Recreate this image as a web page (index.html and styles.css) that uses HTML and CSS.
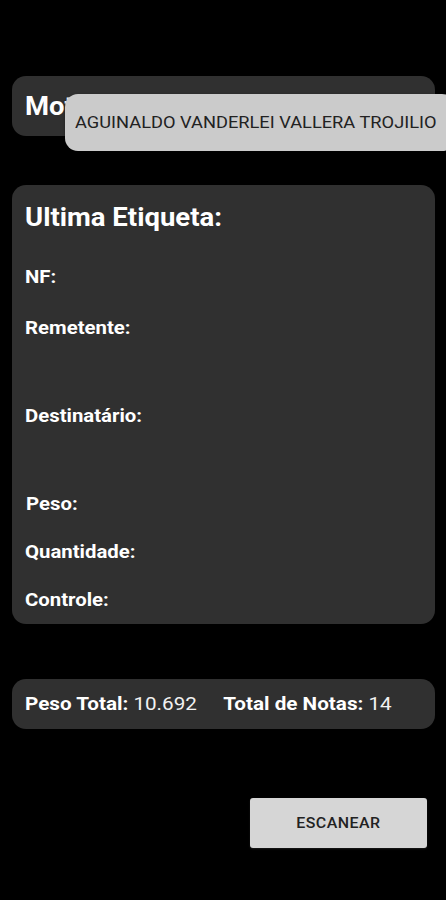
FILE: index.html
```html
<!DOCTYPE html>
<html lang="pt">
<head>
    <meta charset="UTF-8">
    <meta name="viewport" content="width=device-width, initial-scale=1.0">
    <title>Etiquetas</title>
    <link rel="stylesheet" href="styles.css">
</head>
<body>
    <div class="screen">
        <div class="card driver-card">
            <span class="wide driver-label">Motorista:</span>
        </div>

        <div class="toast"><span class="wide">AGUINALDO VANDERLEI VALLERA TROJILIO</span></div>

        <div class="card label-card">
            <div class="wide label-body">
                <h1>Ultima Etiqueta:</h1>
                <div class="field">
                    <span class="field-name">NF:</span>
                </div>
                <div class="field spaced">
                    <span class="field-name">Remetente:</span>
                    <div class="field-value tall"></div>
                </div>
                <div class="field">
                    <span class="field-name">Destinatário:</span>
                    <div class="field-value tall"></div>
                </div>
                <div class="field shifted">
                    <span class="field-name">Peso:</span>
                </div>
                <div class="field">
                    <span class="field-name">Quantidade:</span>
                </div>
                <div class="field">
                    <span class="field-name">Controle:</span>
                </div>
            </div>
        </div>

        <div class="card totals-card">
            <div class="wide totals-row">
                <div class="total">
                    <b>Peso Total:</b> <span>10.692</span>
                </div>
                <div class="total">
                    <b>Total de Notas:</b> <span>14</span>
                </div>
            </div>
        </div>

        <div class="actions">
            <button type="button" class="scan-button"><span class="wide center">ESCANEAR</span></button>
        </div>
    </div>
</body>
</html>
```

FILE: styles.css
```css
* {
    margin: 0;
    padding: 0;
    box-sizing: border-box;
}

body {
    font-family: Roboto, "Noto Sans", sans-serif;
    background: #000;
    color: #fff;
    width: 446px;
    height: 900px;
    overflow: hidden;
}

/* a captura original está um pouco esticada na horizontal */
.wide {
    display: inline-block;
    transform: scaleX(1.1);
    transform-origin: left center;
}

.wide.center {
    transform-origin: center;
}

.screen {
    position: relative;
    padding: 76px 11px 0 12px;
}

.card {
    background: #303030;
    border-radius: 14px;
}

/* cabeçalho do motorista */
.driver-card {
    height: 60px;
    display: flex;
    align-items: center;
    padding-left: 13px;
}

.driver-label {
    font-size: 25px;
    font-weight: bold;
}

/* toast por cima do cabeçalho */
.toast {
    position: absolute;
    top: 94px;
    left: 65px;
    width: 390px;
    height: 57px;
    background: #cbcbcb;
    color: #222;
    border-radius: 13px;
    font-size: 16.6px;
    display: flex;
    align-items: center;
    padding-left: 10px;
    white-space: nowrap;
    box-shadow: 0 1px 3px rgba(0, 0, 0, 0.4);
}

/* ultima etiqueta */
.label-card {
    margin-top: 49px;
    padding: 19px 13px 12px;
}

.label-body {
    display: flex;
    flex-direction: column;
    gap: 24px;
}

.label-card h1 {
    font-size: 25px;
    line-height: 28px;
    font-weight: bold;
    margin-bottom: 9px;
}

.field-name {
    display: block;
    font-size: 18.5px;
    line-height: 24px;
    font-weight: bold;
}

.field.spaced {
    margin-top: 3px;
}

.field-value.tall {
    height: 40px;
}

.field.shifted {
    padding-left: 1px;
}

/* totais */
.totals-card {
    margin-top: 55px;
    height: 50px;
    display: flex;
    align-items: center;
    padding-left: 13px;
    font-size: 18.8px;
}

.totals-row {
    display: flex;
    gap: 24px;
}

.total b {
    font-weight: bold;
}

.total span {
    font-weight: normal;
    color: #f2f2f2;
}

.actions {
    display: flex;
    justify-content: flex-end;
    margin-top: 69px;
    padding-right: 8px;
}

.scan-button {
    width: 177px;
    height: 50px;
    background: #d6d6d6;
    border: none;
    border-radius: 3px;
    font-family: Roboto, sans-serif;
    font-size: 14.5px;
    font-weight: 500;
    letter-spacing: 0.03em;
    color: #222;
    box-shadow: 0 1px 2px rgba(255, 255, 255, 0.1);
}
```
